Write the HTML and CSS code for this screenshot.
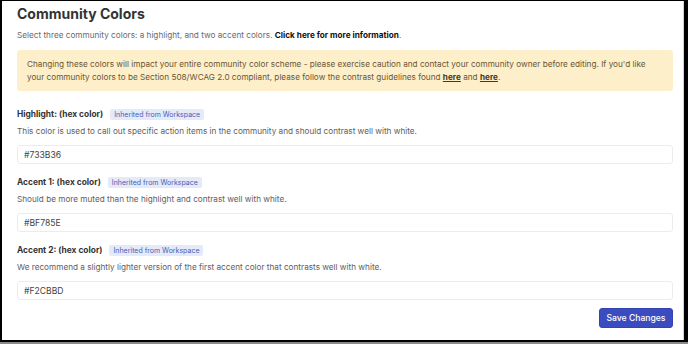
FILE: index.html
```html
<!DOCTYPE html>
<html lang="en">
<head>
  <meta charset="UTF-8">
  <title>Community Colors</title>
  <link rel="stylesheet" href="styles.css">
</head>
<body>

<div class="frame">
  <main>
    <h1>Community Colors</h1>
    <p class="intro">Select three community colors: a highlight, and two accent colors. <a href="#">Click here for more information</a>.</p>

    <div class="aviso">
      Changing these colors will impact your entire community color scheme - please exercise caution and contact your community owner before editing. If you'd like your community colors to be Section 508/WCAG 2.0 compliant, please follow the contrast guidelines found <a href="#">here</a> and <a href="#">here</a>.
    </div>

    <div class="campo">
      <div class="etiqueta">
        <label for="highlight">Highlight: (hex color)</label>
        <span class="badge">Inherited from Workspace</span>
      </div>
      <p class="ayuda">This color is used to call out specific action items in the community and should contrast well with white.</p>
      <input id="highlight" type="text" value="#733B36">
    </div>

    <div class="campo">
      <div class="etiqueta">
        <label for="accent1">Accent 1: (hex color)</label>
        <span class="badge">Inherited from Workspace</span>
      </div>
      <p class="ayuda">Should be more muted than the highlight and contrast well with white.</p>
      <input id="accent1" type="text" value="#BF785E">
    </div>

    <div class="campo">
      <div class="etiqueta">
        <label for="accent2">Accent 2: (hex color)</label>
        <span class="badge">Inherited from Workspace</span>
      </div>
      <p class="ayuda">We recommend a slightly lighter version of the first accent color that contrasts well with white.</p>
      <input id="accent2" type="text" value="#F2CBBD">
    </div>

    <div class="acciones">
      <button>Save Changes</button>
    </div>
  </main>
</div>

</body>
</html>
```

FILE: styles.css
```css
body {
  margin: 0;
  font-family: Inter, "Liberation Sans", sans-serif;
  background-color: #8a8a8a;
  color: #5e5e5e;
}

.frame {
  box-sizing: border-box;
  height: 342px;
  background-color: white;
  border-top: 1px solid #000;
  border-left: 2px solid #000;
  border-right: 4px solid #000;
  border-bottom: 2px solid #000;
  box-shadow: inset -1px 0 0 #d4d4d4;
  overflow: hidden;
}

main {
  padding: 4px 11px 0 15px;
}

h1 {
  margin: 0;
  font-size: 14px;
  line-height: 18px;
  font-weight: 700;
  color: #333;
}

.intro {
  margin: 6px 0 0;
  font-size: 8.2px;
  line-height: 12px;
  color: #6a6a6a;
}

.intro a {
  color: #111;
  font-weight: 700;
  text-decoration: none;
}

.aviso {
  margin-top: 9px;
  padding: 8px 20px 8px 10px;
  background-color: #fdefc9;
  border-radius: 3px;
  font-size: 8.2px;
  line-height: 12.5px;
  color: #6b5634;
}

.aviso a {
  color: #4a3818;
  font-weight: 700;
}

.campo {
  margin-top: 17px;
}

.campo + .campo {
  margin-top: 12px;
}

.etiqueta {
  display: flex;
  align-items: center;
  gap: 7px;
  height: 12px;
}

.etiqueta label {
  font-size: 8.4px;
  line-height: 12px;
  font-weight: 700;
  color: #333;
}

.badge {
  padding: 0 4px;
  background-color: #e4eaf8;
  border-radius: 2px;
  font-size: 7px;
  line-height: 11px;
  color: #4c5bb8;
}

.ayuda {
  margin: 5px 0 0;
  font-size: 8.2px;
  line-height: 12px;
  color: #5e5e5e;
}

input {
  display: block;
  box-sizing: border-box;
  width: 100%;
  height: 19px;
  margin-top: 8px;
  padding: 0 6px;
  border: 1px solid #ececec;
  border-radius: 3px;
  font-family: inherit;
  font-size: 8.6px;
  color: #444;
}

.acciones {
  display: flex;
  justify-content: flex-end;
  margin-top: 8px;
}

button {
  width: 74px;
  height: 20px;
  padding: 0;
  background-color: #3b4cc0;
  border: 1px solid #3444b0;
  border-radius: 3px;
  font-family: inherit;
  font-size: 8.6px;
  font-weight: 500;
  color: white;
  cursor: pointer;
}
```
